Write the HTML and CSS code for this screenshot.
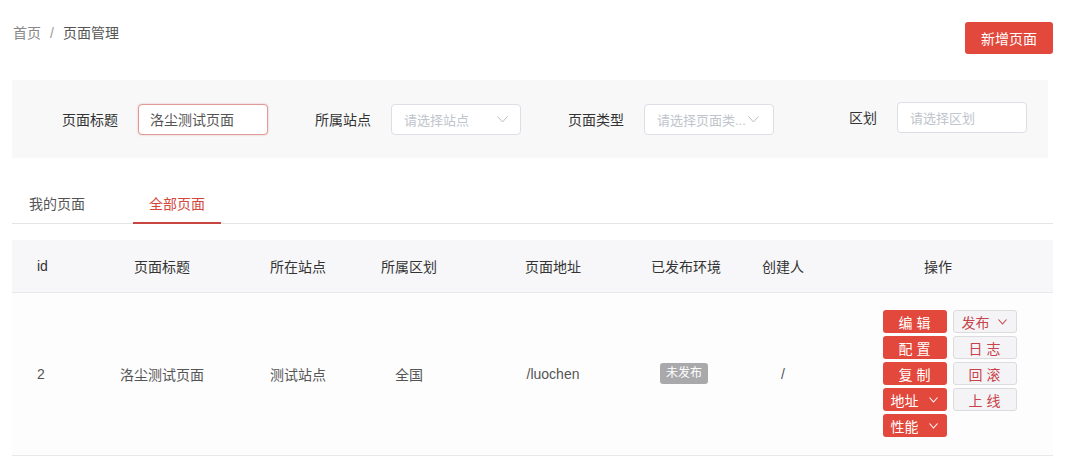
FILE: index.html
```html
<!DOCTYPE html>
<html lang="zh-CN">
<head>
<meta charset="utf-8">
<title>页面管理</title>
<link rel="stylesheet" href="styles.css">
</head>
<body>
<div class="page">
  <div class="topbar">
    <div class="crumbs">
      <span class="crumb-home">首页</span>
      <span class="crumb-sep">/</span>
      <span class="crumb-cur">页面管理</span>
    </div>
    <button class="btn-primary">新增页面</button>
  </div>

  <div class="filters">
    <div class="field">
      <label class="field-label">页面标题</label>
      <div class="control control-active">洛尘测试页面</div>
    </div>
    <div class="field">
      <label class="field-label">所属站点</label>
      <div class="control control-select"><span class="ph">请选择站点</span>
        <svg class="sel-arrow" width="11" height="7" viewBox="0 0 11 7"><polyline points="0.5,0.5 5.5,6 10.5,0.5" fill="none" stroke="#b8bcc4" stroke-width="1"/></svg>
      </div>
    </div>
    <div class="field">
      <label class="field-label">页面类型</label>
      <div class="control control-select tight"><span class="ph">请选择页面类...</span>
        <svg class="sel-arrow" width="11" height="7" viewBox="0 0 11 7"><polyline points="0.5,0.5 5.5,6 10.5,0.5" fill="none" stroke="#b8bcc4" stroke-width="1"/></svg>
      </div>
    </div>
    <div class="field field-up">
      <label class="field-label">区划</label>
      <div class="control"><span class="ph">请选择区划</span></div>
    </div>
  </div>

  <div class="tabs">
    <div class="tab">我的页面</div>
    <div class="tab tab-active">全部页面</div>
  </div>

  <div class="table">
    <div class="trow thead">
      <div class="c c-id">id</div>
      <div class="c">页面标题</div>
      <div class="c">所在站点</div>
      <div class="c">所属区划</div>
      <div class="c">页面地址</div>
      <div class="c">已发布环境</div>
      <div class="c">创建人</div>
      <div class="c c-op-h">操作</div>
    </div>
    <div class="trow tbody">
      <div class="c c-id">2</div>
      <div class="c">洛尘测试页面</div>
      <div class="c">测试站点</div>
      <div class="c">全国</div>
      <div class="c">/luochen</div>
      <div class="c"><span class="badge">未发布</span></div>
      <div class="c">/</div>
      <div class="c c-op">
        <div class="ops">
          <div class="ops-col">
            <button class="op op-red">编 辑</button>
            <button class="op op-red">配 置</button>
            <button class="op op-red">复 制</button>
            <button class="op op-red op-drop">地址<svg width="9" height="6" viewBox="0 0 9 6"><polyline points="0.5,0.5 4.5,5 8.5,0.5" fill="none" stroke="#fff" stroke-width="1.1"/></svg></button>
            <button class="op op-red op-drop">性能<svg width="9" height="6" viewBox="0 0 9 6"><polyline points="0.5,0.5 4.5,5 8.5,0.5" fill="none" stroke="#fff" stroke-width="1.1"/></svg></button>
          </div>
          <div class="ops-col">
            <button class="op op-plain op-drop">发布<svg width="9" height="6" viewBox="0 0 9 6"><polyline points="0.5,0.5 4.5,5 8.5,0.5" fill="none" stroke="#c8434a" stroke-width="1.1"/></svg></button>
            <button class="op op-plain">日 志</button>
            <button class="op op-plain">回 滚</button>
            <button class="op op-plain">上 线</button>
          </div>
        </div>
      </div>
    </div>
  </div>
</div>
</body>
</html>
```

FILE: styles.css
```css
* { box-sizing: border-box; }
html, body { margin: 0; padding: 0; background: #fff; }
body {
  font-family: "Liberation Sans", "Noto Sans CJK SC", sans-serif;
  font-size: 14px;
  color: #333;
}
.page { padding: 22px 15px 0 12px; }

.topbar {
  display: flex;
  justify-content: space-between;
  align-items: flex-start;
}
.crumbs {
  display: flex;
  align-items: center;
  line-height: 22px;
  padding-left: 1px;
  color: #888;
}
.crumb-sep { margin: 0 9px; color: #999; }
.crumb-cur { color: #555; }

.btn-primary {
  width: 88px;
  height: 32px;
  border: none;
  border-radius: 3px;
  background: #e2483b;
  color: #fff;
  font: inherit;
  font-size: 14px;
  padding: 0;
}

.filters {
  margin-top: 26px;
  margin-right: 5px;
  height: 78px;
  background: #f8f8f9;
  display: flex;
  align-items: center;
  padding-left: 26px;
  gap: 23px;
}
.field { display: flex; align-items: center; }
.field-up { margin-top: -4px; }
.field-label {
  width: 80px;
  text-align: right;
  margin-right: 20px;
  color: #333;
}
.control {
  width: 130px;
  height: 31px;
  border: 1px solid #dcdfe6;
  border-radius: 4px;
  background: #fff;
  display: flex;
  align-items: center;
  padding: 0 12px;
  font-size: 14px;
  color: #555;
}
.control-active {
  border-color: #e09a98;
  box-shadow: 0 0 2px rgba(224, 120, 120, 0.5);
  padding-left: 11px;
}
.control-select { justify-content: space-between; padding-right: 12px; }
.control-select.tight { padding-right: 14px; }
.control-select.tight .sel-arrow { margin-left: 0; }
.ph { color: #c0c4cc; font-size: 13px; white-space: nowrap; }

.tabs {
  margin-top: 26px;
  display: flex;
  border-bottom: 1px solid #e4e4e6;
  padding-left: 1px;
  gap: 32px;
}
.tab {
  height: 40px;
  line-height: 40px;
  padding: 0 16px;
  color: #555;
  font-size: 14px;
  border-bottom: 2px solid transparent;
  margin-bottom: -1px;
}
.tab-active {
  color: #d4473c;
  border-bottom-color: #c8463f;
}

.table { margin-top: 16px; }
.trow {
  display: grid;
  grid-template-columns: 78px 144px 128px 94px 194px 72px 122px 209px;
  align-items: center;
  border-bottom: 1px solid #e8e8ea;
}
.thead {
  height: 53px;
  background: #f7f7f9;
  color: #333;
}
.tbody {
  padding: 17px 0 18px;
  color: #555;
  background: #fdfdfe;
}
.c { text-align: center; white-space: nowrap; }
.c-id { text-align: left; padding-left: 25px; }
.c-op-h { padding-right: 21px; }
.c-op { display: flex; justify-content: center; padding-left: 2px; }

.badge {
  display: inline-block;
  background: #a9a9ab;
  color: #fff;
  font-size: 12px;
  line-height: 21px;
  padding: 0 6px;
  border-radius: 3px;
  margin-right: 4px;
}

.ops { display: flex; gap: 6px; }
.ops-col { display: flex; flex-direction: column; gap: 3px; }
.op {
  width: 64px;
  height: 23px;
  padding: 0;
  border-radius: 3px;
  font: inherit;
  font-size: 14px;
  display: flex;
  align-items: center;
  justify-content: center;
}
.op-red { background: #e2483b; border: none; color: #fff; }
.op-plain { background: #f4f4f6; border: 1px solid #dcdcdf; color: #c8434a; }
.op-drop { justify-content: space-between; padding: 0 9px 0 8px; }
```
